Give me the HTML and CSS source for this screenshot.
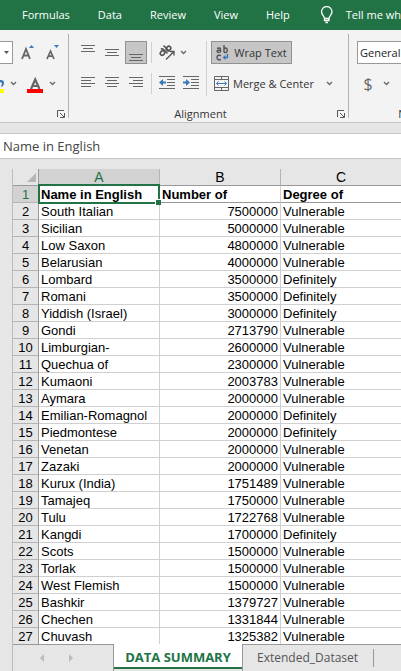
FILE: index.html
```html
<!DOCTYPE html>
<html lang="en">
<head>
<meta charset="utf-8">
<title>Spreadsheet</title>
<link rel="stylesheet" href="styles.css">
</head>
<body>
<nav class="menu">
  <a href="#">Formulas</a><a href="#">Data</a><a href="#">Review</a><a href="#">View</a><a href="#">Help</a>
  <button class="tell"><svg width="14" height="18" viewBox="0 0 14 18" fill="none" stroke="#fff"><path d="M4.5 12.500C4.500 10 1.500 9 1.500 5.800A5.200 5.200 0 0 1 12 5.800C12 9 9 10 9 12.500ZM4.500 12.500V14.500H9V12.500M5.500 16.500H8" stroke-width="1.300"/></svg>Tell me what you want to do</button>
</nav>

<section class="ribbon">
  <div class="group font-group">
    <div class="row">
      <button class="size-drop" aria-label="Font size"><svg width="5" height="3"><path d="M0 0H5L2.500 3Z" fill="#555"/></svg></button>
      <button class="tool grow" aria-label="Increase font size"><svg width="14" height="18" viewBox="0 0 14 18"><path d="M1 15L5 5L9 15M2.500 11.500H7.500" fill="none" stroke="#666" stroke-width="1.800"/><path d="M8 4H13L10.500 1Z" fill="#3a78b8"/></svg></button>
      <button class="tool shrink" aria-label="Decrease font size"><svg width="14" height="18" viewBox="0 0 14 18"><path d="M1 15L4.500 7L8 15M2.500 12.200H6.500" fill="none" stroke="#666" stroke-width="1.700"/><path d="M8 1H13L10.500 4Z" fill="#3a78b8"/></svg></button>
    </div>
    <div class="row">
      <button class="tool fill" aria-label="Fill color"><svg width="4" height="18" viewBox="0 0 4 18"><path d="M0 5H1Q4 5 4 8Q4 11 1 12L2 8L0 7Z" fill="#3a78b8"/><path d="M0 14H4V18H0Z" fill="#ff0"/></svg></button>
      <button class="tool chev" aria-label="Fill color options"><svg width="7" height="5" viewBox="0 0 7 5"><path d="M1 1L3.500 3.500L6 1" fill="none" stroke="#666" stroke-width="1.300"/></svg></button>
      <button class="tool ink" aria-label="Font color"><svg width="16" height="18" viewBox="0 0 16 18"><path d="M4 14L8.200 4.500L12.500 14M5.500 11H11" fill="none" stroke="#666" stroke-width="2.200"/><path d="M0 14H16V18H0Z" fill="#f00"/></svg></button>
      <button class="tool chev" aria-label="Font color options"><svg width="7" height="5" viewBox="0 0 7 5"><path d="M1 1L3.500 3.500L6 1" fill="none" stroke="#666" stroke-width="1.300"/></svg></button>
    </div>
    <button class="launcher" aria-label="Font settings"><svg width="8" height="8" viewBox="0 0 8 8" fill="none" stroke="#555"><path d="M.5 7V.5H7M3 3L7 7M7.500 3V7.500H3"/></svg></button>
  </div>

  <div class="group align-group">
    <div class="controls">
      <div class="side">
        <div class="row">
          <button class="icon" aria-label="Top align"><svg width="14" height="16" viewBox="0 0 14 16" stroke="#666"><path d="M0 .5H14M2 3.500H12M0 6.500H14"/></svg></button>
          <button class="icon" aria-label="Middle align"><svg width="14" height="16" viewBox="0 0 14 16" stroke="#666"><path d="M0 4.500H14M2 7.500H12M0 10.500H14"/></svg></button>
          <button class="icon pressed" aria-label="Bottom align"><svg width="14" height="16" viewBox="0 0 14 16" stroke="#666"><path d="M0 9.500H14M2 12.500H12M0 15.500H14"/></svg></button>
          <i class="bar"></i>
          <button class="icon" aria-label="Orientation"><svg width="18" height="18" viewBox="0 0 18 18" fill="none" stroke="#555" stroke-width="1.600"><ellipse cx="4.500" cy="9" rx="2.500" ry="1.900" transform="rotate(-45 4.500 9)"/><path d="M3 5.500Q4 4 5.500 5.500L9.500 9.500M5.500 1.500L11.500 7.500"/><ellipse cx="10.500" cy="4.500" rx="2.500" ry="2" transform="rotate(-45 10.500 4.500)"/><path d="M8 15.500L15.500 8M12 7.500H16V11.500" stroke-width="1.300"/></svg></button>
          <button class="tool chev" aria-label="Orientation options"><svg width="7" height="5" viewBox="0 0 7 5"><path d="M1 1L3.500 3.500L6 1" fill="none" stroke="#666" stroke-width="1.300"/></svg></button>
        </div>
        <div class="row">
          <button class="icon" aria-label="Align left"><svg width="14" height="13" viewBox="0 0 14 13" stroke="#666"><path d="M0 .5H14M0 3.500H10M0 6.500H14M0 9.500H10"/></svg></button>
          <button class="icon" aria-label="Center"><svg width="14" height="13" viewBox="0 0 14 13" stroke="#666"><path d="M0 .5H14M2 3.500H12M0 6.500H14M2 9.500H12"/></svg></button>
          <button class="icon" aria-label="Align right"><svg width="14" height="13" viewBox="0 0 14 13" stroke="#666"><path d="M0 .5H14M4 3.500H14M0 6.500H14M4 9.500H14"/></svg></button>
          <i class="bar"></i>
          <button class="icon" aria-label="Decrease indent"><svg width="16" height="15" viewBox="0 0 16 15"><path d="M0 .5H16M8 3.500H16M8 6.500H16M8 9.500H16M0 12.500H16" stroke="#666"/><path d="M0 6.500L4 3V5.500H7V7.500H4V10Z" fill="#3a78b8"/></svg></button>
          <button class="icon" aria-label="Increase indent"><svg width="16" height="15" viewBox="0 0 16 15"><path d="M0 .5H16M8 3.500H16M8 6.500H16M8 9.500H16M0 12.500H16" stroke="#666"/><path d="M7 6.500L3 3V5.500H0V7.500H3V10Z" fill="#3a78b8"/></svg></button>
        </div>
      </div>
      <i class="bar tall"></i>
      <div class="side">
        <div class="row"><button class="wrap"><svg width="14" height="16" viewBox="0 0 14 16" fill="none" stroke="#555" stroke-width="1.400"><path d="M1 3.500Q4.500 2 4.500 4.500V7.500M4.500 5Q1 5 1 6.500Q2 8.500 4.500 6.500M8 0V7.500M8 4Q9.500 2 11 4Q12 7 9.500 7.500H8M5 10.500Q1 9.500 1 12.500Q1 15.500 5 14.500"/><path d="M11.500 9V12.500H8" stroke="#3a78b8"/><path d="M9.500 10V15L6.500 12.500Z" fill="#3a78b8" stroke="none"/></svg>Wrap Text</button></div>
        <div class="row"><button class="merge"><svg width="15" height="15" viewBox="0 0 15 15" fill="none"><path d="M.5 .5H14.500V14.500H.5ZM.5 3.500H14.500M.5 11.500H14.500M7.500 .5V3.500M7.500 11.500V14.500" stroke="#666"/><path d="M2.500 7.500H12.500M4.500 5.500L2.500 7.500L4.500 9.500M10.500 5.500L12.500 7.500L10.500 9.500" stroke="#3a78b8"/></svg>Merge &amp; Center</button>
          <button class="tool chev" aria-label="Merge options"><svg width="7" height="5" viewBox="0 0 7 5"><path d="M1 1L3.500 3.500L6 1" fill="none" stroke="#666" stroke-width="1.300"/></svg></button></div>
      </div>
    </div>
    <div class="caption">Alignment</div>
    <button class="launcher" aria-label="Alignment settings"><svg width="8" height="8" viewBox="0 0 8 8" fill="none" stroke="#555"><path d="M.5 7V.5H7M3 3L7 7M7.500 3V7.500H3"/></svg></button>
  </div>

  <div class="group number-group">
    <div class="row"><select class="format" aria-label="Number format"><option>General</option></select></div>
    <div class="row"><button class="money" aria-label="Accounting format">$</button>
      <button class="tool chev" aria-label="Currency options"><svg width="7" height="5" viewBox="0 0 7 5"><path d="M1 1L3.500 3.500L6 1" fill="none" stroke="#666" stroke-width="1.300"/></svg></button></div>
    <div class="caption">Number</div>
  </div>
</section>

<input class="formula" aria-label="Formula bar" value="Name in English">

<main class="sheet">
<table>
<colgroup><col class="c-num"><col class="c-col"><col class="c-col"><col></colgroup>
<thead><tr><th class="corner"><svg width="9" height="9"><path d="M9 0V9H0Z" fill="#b5b5b5"/></svg></th><th class="active">A</th><th>B</th><th>C</th></tr></thead>
<tbody>
<tr class="titles"><th class="active">1</th><td class="selected">Name in English<i class="cursor"></i></td><td>Number of</td><td>Degree of</td></tr>
<tr><th>2</th><td>South Italian</td><td>7500000</td><td>Vulnerable</td></tr>
<tr><th>3</th><td>Sicilian</td><td>5000000</td><td>Vulnerable</td></tr>
<tr><th>4</th><td>Low Saxon</td><td>4800000</td><td>Vulnerable</td></tr>
<tr><th>5</th><td>Belarusian</td><td>4000000</td><td>Vulnerable</td></tr>
<tr><th>6</th><td>Lombard</td><td>3500000</td><td>Definitely</td></tr>
<tr><th>7</th><td>Romani</td><td>3500000</td><td>Definitely</td></tr>
<tr><th>8</th><td>Yiddish (Israel)</td><td>3000000</td><td>Definitely</td></tr>
<tr><th>9</th><td>Gondi</td><td>2713790</td><td>Vulnerable</td></tr>
<tr><th>10</th><td>Limburgian-</td><td>2600000</td><td>Vulnerable</td></tr>
<tr><th>11</th><td>Quechua of</td><td>2300000</td><td>Vulnerable</td></tr>
<tr><th>12</th><td>Kumaoni</td><td>2003783</td><td>Vulnerable</td></tr>
<tr><th>13</th><td>Aymara</td><td>2000000</td><td>Vulnerable</td></tr>
<tr><th>14</th><td>Emilian-Romagnol</td><td>2000000</td><td>Definitely</td></tr>
<tr><th>15</th><td>Piedmontese</td><td>2000000</td><td>Definitely</td></tr>
<tr><th>16</th><td>Venetan</td><td>2000000</td><td>Vulnerable</td></tr>
<tr><th>17</th><td>Zazaki</td><td>2000000</td><td>Vulnerable</td></tr>
<tr><th>18</th><td>Kurux (India)</td><td>1751489</td><td>Vulnerable</td></tr>
<tr><th>19</th><td>Tamajeq</td><td>1750000</td><td>Vulnerable</td></tr>
<tr><th>20</th><td>Tulu</td><td>1722768</td><td>Vulnerable</td></tr>
<tr><th>21</th><td>Kangdi</td><td>1700000</td><td>Definitely</td></tr>
<tr><th>22</th><td>Scots</td><td>1500000</td><td>Vulnerable</td></tr>
<tr><th>23</th><td>Torlak</td><td>1500000</td><td>Vulnerable</td></tr>
<tr><th>24</th><td>West Flemish</td><td>1500000</td><td>Vulnerable</td></tr>
<tr><th>25</th><td>Bashkir</td><td>1379727</td><td>Vulnerable</td></tr>
<tr><th>26</th><td>Chechen</td><td>1331844</td><td>Vulnerable</td></tr>
<tr><th>27</th><td>Chuvash</td><td>1325382</td><td>Vulnerable</td></tr>
</tbody>
</table>
<footer class="tabs">
  <div class="nav">
    <button class="tool" aria-label="Previous sheet"><svg width="4" height="8"><path d="M4 0V8L0 4Z" fill="#bbb"/></svg></button>
    <button class="tool" aria-label="Next sheet"><svg width="4" height="8"><path d="M0 0V8L4 4Z" fill="#bbb"/></svg></button>
  </div>
  <button class="tab current">DATA SUMMARY</button>
  <div class="rest"><button class="tab">Extended_Dataset</button><i class="bar"></i></div>
</footer>
</main>
</body>
</html>
```
FILE: styles.css
```css
* { box-sizing: border-box; }
body {
  margin: 0;
  background: #e6e6e6;
  font: 12px/16px "Open Sans", sans-serif;
  color: #333;
  overflow: hidden;
}
button {
  border: 0;
  padding: 0;
  background: none;
  font: inherit;
  color: inherit;
  display: flex;
  align-items: center;
  justify-content: center;
  flex: none;
}
svg { display: block; flex: none; }

.menu {
  display: flex;
  align-items: center;
  gap: 28px;
  height: 30px;
  padding-left: 22px;
  background: #217346;
  color: #fff;
  font-size: 11px;
  white-space: nowrap;
  overflow: hidden;
}
.menu a { color: inherit; text-decoration: none; }
.tell { gap: 12px; padding-left: 2px; }

.ribbon {
  display: flex;
  height: 93px;
  background: #f3f3f3;
  border-bottom: 1px solid #c6c6c6;
  overflow: hidden;
}
.group {
  position: relative;
  flex: none;
  margin: 4px 0;
  padding-top: 7px;
  border-right: 1px solid #b1b1b1;
}
.row { display: flex; align-items: center; height: 23px; }
.row + .row { margin-top: 8px; }
.font-group { width: 69px; }
.align-group { width: 280px; padding-left: 8px; }
.number-group { width: 142px; padding-left: 8px; }

.size-drop {
  width: 13px;
  height: 23px;
  border: 1px solid #999;
  border-left: 0;
  background: #fff;
}
.grow { margin-left: 8px; }
.shrink { margin-left: 11px; }
.ink { margin: 0 6px 0 10px; }
.fill { margin-right: 6px; }
.chev { width: 7px; }

.controls { display: flex; }
.icon { width: 22px; height: 23px; margin-right: 2px; }
.pressed, .wrap { background: #c6c6c6; border: 1px solid #919191; }
.bar { width: 1px; height: 21px; margin: 0 4px 0 2px; background: #d0d0d0; }
.tall { height: 55px; margin: 0 4px 0 2px; }
.wrap { width: 81px; height: 23px; gap: 4px; font-size: 11px; }
.merge { gap: 4px; margin: 0 12px 0 3px; font-size: 11px; }
.caption {
  position: absolute;
  left: 0;
  right: 0;
  bottom: -4px;
  text-align: center;
  font-size: 11px;
}
.launcher { position: absolute; right: 3px; bottom: 0; }
.align-group .caption { right: 16px; }
.format {
  appearance: none;
  width: 120px;
  height: 23px;
  padding: 0 2px;
  border: 1px solid #999;
  border-radius: 0;
  background: #fff;
  font: inherit;
  font-size: 11px;
  color: #222;
}
.money { width: 22px; margin-right: 4px; font-size: 16px; color: #666; }

.formula {
  display: block;
  width: 100%;
  height: 26px;
  margin: 10px 0;
  padding: 0 3px;
  border: solid #c6c6c6;
  border-width: 1px 0;
  background: #fff;
  font: 13px/24px "Open Sans", sans-serif;
  color: #444;
}

.sheet { padding-left: 12px; }
table {
  width: 100%;
  table-layout: fixed;
  border-collapse: separate;
  border-spacing: 0;
  border-left: 1px solid #bbb;
  font: 13px/15px "Liberation Sans", Arial, sans-serif;
  color: #000;
}
.c-num { width: 26px; }
.c-col { width: 121px; }
th, td {
  height: 17px;
  padding: 1px 2px 0;
  border: solid #d0d0d0;
  border-width: 0 1px 1px 0;
  text-align: left;
  white-space: nowrap;
}
td { background: #fff; }
td:nth-child(3) { text-align: right; }
th { background: #e6e6e6; text-align: center; font-weight: 400; border-color: #b5b5b5; }
th:first-child { border-right-color: #999; }
thead th { border-bottom-color: #999; font-size: 14px; }
.active { background: #d2d2d2; color: #217346; }
.corner svg { margin-left: 12px; }
.titles td { font-weight: 700; text-align: left; border-bottom-color: #999; }
th:last-child, td:last-child { border-right: 0; }
.selected { position: relative; }
.cursor { position: absolute; inset: -2px -1px; border: 2px solid #217346; }
.cursor::after {
  content: "";
  position: absolute;
  right: -3px;
  bottom: -3px;
  width: 5px;
  height: 5px;
  border: solid #fff;
  border-width: 1px 0 0 1px;
  background: #217346;
}

.tabs { display: flex; height: 27px; margin-top: -1px; border-left: 1px solid #bbb; }
.nav {
  display: flex;
  gap: 25px;
  width: 101px;
  padding-left: 27px;
  border: solid #999;
  border-width: 1px 1px 0 0;
}
.tab { font-size: 12px; color: #555; }
.current {
  width: 128px;
  height: 25px;
  padding-top: 2px;
  border-bottom: 2px solid #217346;
  background: #fff;
  font-size: 13px;
  font-weight: 700;
  color: #217346;
}
.rest {
  display: flex;
  flex: 1;
  align-items: center;
  padding-left: 14px;
  border: solid #999;
  border-width: 1px 0 0 1px;
}
.rest .bar { height: 18px; margin: 0 0 0 15px; background: #999; }
```
